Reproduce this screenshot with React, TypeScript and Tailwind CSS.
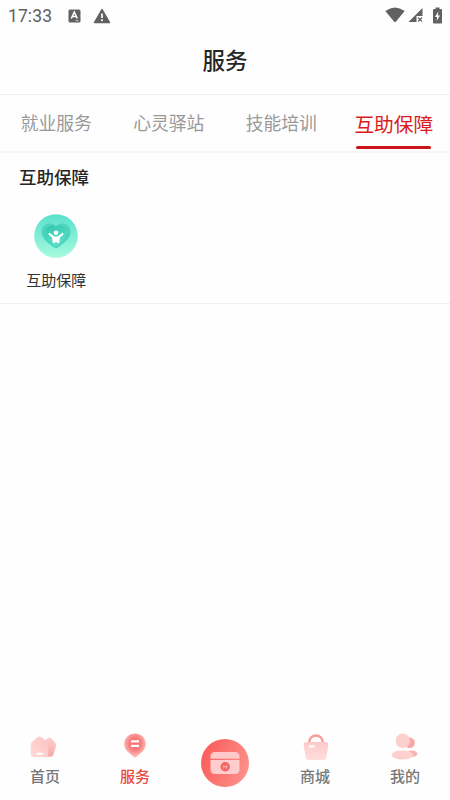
import React from 'react';
import clsx from 'clsx';

const tabs = ['就业服务', '心灵驿站', '技能培训', '互助保障'];
const activeTab = 3;

const HomeIcon = () => (
  <svg width="30" height="30" viewBox="0 0 30 30">
    <defs>
      <linearGradient id="homeBack" x1="0" y1="0" x2="0" y2="1">
        <stop offset="0" stopColor="#fdd0cd" />
        <stop offset="1" stopColor="#f8a9a7" />
      </linearGradient>
      <linearGradient id="homeFront" x1="0" y1="1" x2="1" y2="0">
        <stop offset="0" stopColor="#ffdbda" />
        <stop offset="1" stopColor="#fdc2c1" />
      </linearGradient>
    </defs>
    <path d="M15 8 L18.500 5.800 Q20 5.200 21.500 6.500 L25 10.500 Q26.500 12.500 25.800 14.500 L23.500 22.500 Q23 24.700 20.500 24.700 H15 Z" fill="url(#homeBack)" />
    <path d="M7.500 5.200 Q9.300 3.800 11.100 5.200 L17 9.800 Q18.200 10.900 18.200 12.600 V22 Q18.200 25 15.200 25 H3.700 Q0.700 25 0.700 22 V13 Q0.700 11 2.200 9.800 Z" fill="url(#homeFront)" />
    <rect x="6.300" y="20.800" width="7" height="2" rx="1" fill="#fff" />
  </svg>
);

const ServiceIcon = () => (
  <svg width="30" height="30" viewBox="0 0 30 30">
    <defs>
      <radialGradient id="pin" cx="0.500" cy="0.420" r="0.560">
        <stop offset="0" stopColor="#f86666" />
        <stop offset="0.500" stopColor="#f98080" />
        <stop offset="1" stopColor="#fdc4c3" />
      </radialGradient>
    </defs>
    <path d="M15 1.500 C21 1.500 25.800 6 25.800 12 C25.800 16 23.500 19 20.500 21.300 L16.500 25 Q15 26.300 13.500 25 L9.500 21.300 C6.500 19 4.200 16 4.200 12 C4.200 6 9 1.500 15 1.500 Z" fill="url(#pin)" />
    <rect x="11" y="8.300" width="8" height="2.200" rx="0.500" fill="#fff" />
    <rect x="11" y="12.700" width="8" height="2.200" rx="0.500" fill="#fff" />
  </svg>
);

const MallIcon = () => (
  <svg width="30" height="30" viewBox="0 0 30 30">
    <defs>
      <linearGradient id="bag" x1="0" y1="0" x2="0" y2="1">
        <stop offset="0" stopColor="#fdcac9" />
        <stop offset="1" stopColor="#ffdddc" />
      </linearGradient>
    </defs>
    <path d="M9.200 11 C9.200 1 22.800 1 22.800 11" fill="none" stroke="#f69b98" strokeWidth="2.600" />
    <path d="M6.500 10 H25.500 Q28.800 10 28.300 13 L26.500 25 Q26 28 23 28 H9 Q6 28 5.500 25 L3.700 13 Q3.200 10 6.500 10 Z" fill="url(#bag)" />
    <rect x="8.700" y="13.300" width="6" height="2.300" rx="1" fill="#fff" />
  </svg>
);

const MineIcon = () => (
  <svg width="30" height="30" viewBox="0 0 30 30">
    <circle cx="19.700" cy="10.700" r="5.200" fill="#f8a8a7" />
    <ellipse cx="22" cy="21.700" rx="5.300" ry="3.200" fill="#f9b3b2" />
    <circle cx="12.800" cy="8.800" r="7.200" fill="#fdcfcd" />
    <ellipse cx="12.300" cy="23" rx="10.700" ry="4.500" fill="#fdcfcd" />
  </svg>
);

const CardIcon = () => (
  <svg width="48" height="48" viewBox="0 0 48 48">
    <defs>
      <linearGradient id="disc" x1="0" y1="0.300" x2="1" y2="0.700">
        <stop offset="0" stopColor="#fa5c5b" />
        <stop offset="1" stopColor="#fd918c" />
      </linearGradient>
    </defs>
    <circle cx="24" cy="24" r="24" fill="url(#disc)" />
    <path d="M9.500 19.700 V17.500 Q9.500 13 14 13 H34 Q38.500 13 38.500 17.500 V19.700 Z" fill="#ffc9c9" />
    <path d="M9.500 21 H38.500 V30.500 Q38.500 35 34 35 H14 Q9.500 35 9.500 30.500 Z" fill="#ffcdcd" />
    <circle cx="24.200" cy="27.800" r="4.700" fill="#f76363" />
    <path d="M21.700 27.800 H26.700 M22.900 25.800 V29.800 M25.500 25.800 V29.800" stroke="#ffb5b5" strokeWidth="0.800" />
  </svg>
);

const HeartIcon = () => (
  <svg width="44" height="44" viewBox="0 0 44 44">
    <defs>
      <linearGradient id="mint" x1="0" y1="0" x2="0" y2="1">
        <stop offset="0" stopColor="#5be0cc" />
        <stop offset="1" stopColor="#a6fade" />
      </linearGradient>
      <linearGradient id="heart" x1="0" y1="0" x2="0.300" y2="1">
        <stop offset="0" stopColor="#2fc7b0" />
        <stop offset="1" stopColor="#61dfc7" />
      </linearGradient>
    </defs>
    <circle cx="22" cy="22" r="21.800" fill="url(#mint)" />
    <path d="M22 11.800 C17 7.500 8 9.500 7.500 17.500 C7.300 24 13 28.500 19.500 33 Q22 34.800 24.500 33 C31 28.500 36.700 24 36.500 17.500 C36 9.500 27 7.500 22 11.800 Z" fill="#4bd4be" />
    <path d="M22 13.500 C18 10 12.200 12 11.500 18 C11.300 23.500 15.500 27.500 20 31.300 Q22 32.800 24 31.300 C28.500 27.500 32.700 23.500 32.500 18 C31.800 12 26 10 22 13.500 Z" fill="url(#heart)" />
    <circle cx="22" cy="18.800" r="2.300" fill="#fff" />
    <path d="M15.500 20 L19.500 23.300 Q22 24.300 24.500 23.300 L28.500 20" fill="none" stroke="#fff" strokeWidth="2.200" strokeLinecap="round" strokeLinejoin="round" />
    <path d="M17.800 22.500 L22 23 L26.200 22.500 L25.300 28 Q25 29.800 23.600 28.900 L22 27.800 L20.400 28.900 Q19 29.800 18.700 28 Z" fill="#fff" />
  </svg>
);

const navItems = [
  { label: '首页', icon: <HomeIcon />, active: false },
  { label: '服务', icon: <ServiceIcon />, active: true },
  { label: '', icon: <CardIcon />, active: false },
  { label: '商城', icon: <MallIcon />, active: false },
  { label: '我的', icon: <MineIcon />, active: false },
];

const StatusBar = () => (
  <div className="flex h-8 items-center justify-between pr-2 pl-2 text-[#616161]">
    <div className="flex items-center">
      <span className="w-[60px] font-['Roboto',sans-serif] text-[17.5px] leading-8 tracking-[0.1px]">17:33</span>
      <svg width="13" height="14" viewBox="0 0 13 14">
        <rect x="0.500" y="0.500" width="12" height="13" rx="1.500" fill="currentColor" />
        <path d="M3.300 9.500 L6.300 3 L9.300 9.500 M4.400 7.400 H8.200" fill="none" stroke="#fff" strokeWidth="1.500" />
        <path d="M7.500 11.600 H10.500" stroke="#ddd" strokeWidth="0.800" />
      </svg>
      <svg className="ml-3" width="18" height="16" viewBox="0 0 18 16">
        <path d="M9 1.500 L16.500 14.500 H1.500 Z" fill="currentColor" stroke="currentColor" strokeWidth="1.500" strokeLinejoin="round" />
        <path d="M9 5.500 V10" stroke="#fff" strokeWidth="1.700" />
        <rect x="8.100" y="11.300" width="1.800" height="1.800" fill="#fff" />
      </svg>
    </div>
    <div className="flex items-center pb-0.5">
      <svg width="20" height="16" viewBox="0 0 20 16">
        <path d="M0.300 4 Q10 -3 19.700 4 L10.800 14.800 Q10 15.600 9.200 14.800 Z" fill="currentColor" />
      </svg>
      <svg className="ml-[3px]" width="15" height="16" viewBox="0 0 15 16">
        <path d="M14.500 1 V9 H8.500 V15 H0.500 Z" fill="currentColor" />
        <path d="M10 10.500 L14 14.500 M14 10.500 L10 14.500" stroke="currentColor" strokeWidth="1.100" />
      </svg>
      <svg className="ml-2.5" width="9" height="17" viewBox="0 0 9 17">
        <path d="M2.500 0.500 H6.500 V2 H8 Q9 2 9 3 V15.500 Q9 16.500 8 16.500 H1 Q0 16.500 0 15.500 V3 Q0 2 1 2 H2.500 Z" fill="currentColor" />
        <path d="M5.300 4.500 L2 10 H4.100 L3.700 14 L7 8.500 H4.900 Z" fill="#fff" />
      </svg>
    </div>
  </div>
);

export default function App() {
  return (
    <div className="flex h-[800px] w-[450px] flex-col overflow-hidden bg-[#fefefe] font-['Noto_Sans_CJK_SC',sans-serif]">
      <StatusBar />

      <header className="flex h-[63px] items-center justify-center border-b border-[#f0f0f0] pb-[7px]">
        <h1 className="text-[22.5px] font-medium text-[#262626]">服务</h1>
      </header>

      {/* Category tabs */}
      <div className="grid h-[58px] grid-cols-4 border-b-2 border-[#f6f6f6]">
        {tabs.map((tab, i) => (
          <div key={tab} className="flex flex-col items-center justify-between">
            <span
              className={clsx(
                'whitespace-nowrap',
                i === activeTab
                  ? 'text-[19.7px] leading-[57px] text-[#d91c1c]'
                  : 'text-[17.8px] leading-[55px] text-[#999999]'
              )}
            >
              {tab}
            </span>
            {i === activeTab && <div className="-mt-2 mb-0.5 h-[3px] w-[75px] shrink-0 rounded-full bg-[#cb1419]" />}
          </div>
        ))}
      </div>

      {/* Service group */}
      <section className="h-[151px] border-b border-[#f0f0f0]">
        <h2 className="pl-[19px] text-[17.5px] leading-[47px] font-medium text-[#262626]">互助保障</h2>
        <div className="grid grid-cols-4 pt-3.5">
          <div className="flex flex-col items-center">
            <HeartIcon />
            <span className="mt-[11px] text-[15px] leading-[22px] text-[#333333]">互助保障</span>
          </div>
        </div>
      </section>

      <main className="flex-1" />

      <nav className="grid h-[68px] grid-cols-5">
        {navItems.map((item, i) => (
          <div key={i} className={clsx('flex flex-col items-center', !item.label && 'pt-[7px]')}>
            {item.icon}
            {item.label && (
              <span
                className={clsx(
                  'mt-[3px] text-[15px] leading-[22px] font-medium',
                  item.active ? 'text-[#e9473f]' : 'text-[#777777]'
                )}
              >
                {item.label}
              </span>
            )}
          </div>
        ))}
      </nav>
    </div>
  );
}
